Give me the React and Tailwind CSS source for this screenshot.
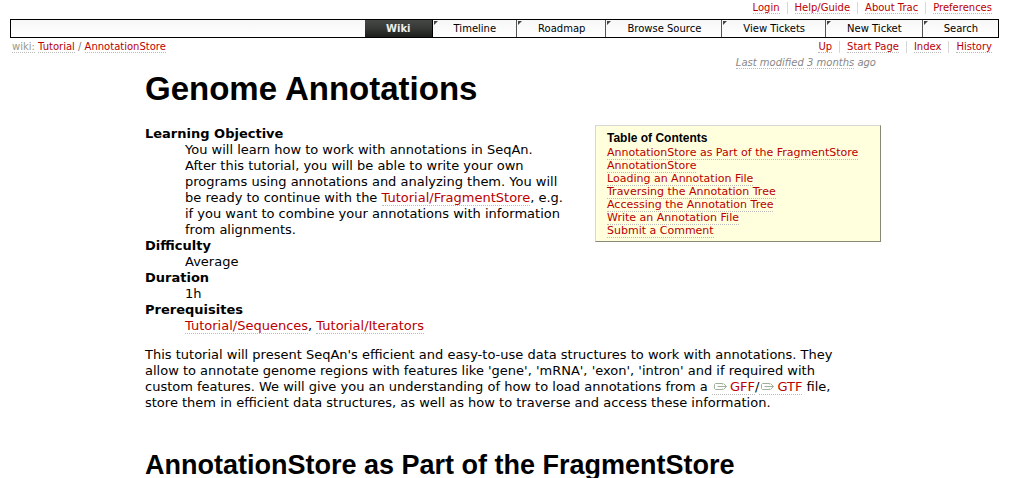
const tabs = ["Wiki", "Timeline", "Roadmap", "Browse Source", "View Tickets", "New Ticket", "Search"];
const metaLinks = ["Login", "Help/Guide", "About Trac", "Preferences"];
const pageLinks = ["Up", "Start Page", "Index", "History"];
const contents = [
  "AnnotationStore as Part of the FragmentStore",
  "AnnotationStore",
  "Loading an Annotation File",
  "Traversing the Annotation Tree",
  "Accessing the Annotation Tree",
  "Write an Annotation File",
  "Submit a Comment",
];

function Link({ children, tone = "text-[#bb0000]" }) {
  return (
    <a href="#" className={"border-b border-dotted border-[#bbbbbb] " + tone}>
      {children}
    </a>
  );
}

function LinkBar({ label, items }) {
  return (
    <nav aria-label={label}>
      <ul className="flex justify-end">
        {items.map((item) => (
          <li key={item} className="border-r border-[#d7d7d7] px-[7px] leading-3 last:border-r-0">
            <Link>{item}</Link>
          </li>
        ))}
      </ul>
    </nav>
  );
}

function ExternalLink({ children }) {
  return (
    <a href="#" className="border-b border-dotted border-[#bbbbbb] text-[#bb0000]">
      <svg className="mr-[2px] ml-[2px] inline-block h-[9px] w-[14px] align-baseline" viewBox="0 0 14 9" fill="none" stroke="#9fb09a" aria-hidden="true">
        <path d="M8.5 2.5v-1H1.5l-1 1v4l1 1h7v-1M3.5 4.5h9M9.5 1.5l3 3-3 3" />
      </svg>
      {children}
    </a>
  );
}

export default function App() {
  return (
    <div className="bg-white px-[10px] font-['DejaVu_Sans',sans-serif] text-[13px] leading-4 text-black">
      <header className="text-[10px] leading-3">
        <div className="h-[19px] pt-[2px]">
          <LinkBar label="Account" items={metaLinks} />
        </div>
        <nav aria-label="Main" className="border border-black bg-linear-to-b from-[#f7f7f7] to-white">
          <ul className="flex justify-end">
            {tabs.map((tab, i) =>
              i === 0 ? (
                <li key={tab} className="border-r border-black bg-linear-to-b from-[#454845] via-[#353835] to-[#1c1e1c]">
                  <a href="#" aria-current="page" className="block px-[21px] pt-[3px] pb-[2px] font-bold text-[#eeeeee]">{tab}</a>
                </li>
              ) : (
                <li key={tab} className="relative border-r border-[#555555] last:border-r-0">
                  <svg className="absolute top-px left-px size-1" viewBox="0 0 4 4" aria-hidden="true">
                    <path d="M0 0h4L0 4z" fill="#444" />
                  </svg>
                  <a href="#" className="block pt-[3px] pr-5 pb-[2px] pl-[21px]">{tab}</a>
                </li>
              ),
            )}
          </ul>
        </nav>
        <div className="flex justify-between pt-[3px]">
          <nav aria-label="Breadcrumb" className="pl-[2px] text-[#777777]">
            <Link tone="text-[#999988]">wiki:</Link> <Link>Tutorial</Link> / <Link>AnnotationStore</Link>
          </nav>
          <LinkBar label="Page" items={pageLinks} />
        </div>
      </header>

      <main className="mx-auto max-w-[719px]">
        <p className="-mr-3 pt-1 text-right text-[10px] leading-3 text-[#888888] italic">
          <Link tone="text-[#888888]">Last modified</Link> <Link tone="text-[#888888]">3 months</Link> ago
        </p>
        <h1 className="font-['Liberation_Sans',sans-serif] text-[33px] leading-10 font-bold">Genome Annotations</h1>
        <div className="-mr-[17px] flex items-start pt-4">
          <dl className="min-w-0 flex-1 pt-px">
            <dt className="font-bold">Learning Objective</dt>
            <dd className="ml-10">
              You will learn how to work with annotations in SeqAn.
              <br />
              After this tutorial, you will be able to write your own
              <br />
              programs using annotations and analyzing them. You will
              <br />
              be ready to continue with the <Link>Tutorial/FragmentStore</Link>, e.g.
              <br />
              if you want to combine your annotations with information
              <br />
              from alignments.
            </dd>
            <dt className="font-bold">Difficulty</dt>
            <dd className="ml-10">Average</dd>
            <dt className="font-bold">Duration</dt>
            <dd className="ml-10">1h</dd>
            <dt className="font-bold">Prerequisites</dt>
            <dd className="ml-10">
              <Link>Tutorial/Sequences</Link>, <Link>Tutorial/Iterators</Link>
            </dd>
          </dl>
          <nav aria-labelledby="toc" className="ml-3 w-[286px] shrink-0 border border-t-[#d7d7d7] border-r-[#888877] border-b-[#888877] border-l-[#d7d7d7] bg-[#ffffdd] px-[11px] py-1 text-[11px] leading-[13px]">
            <h2 id="toc" className="font-['Liberation_Sans',sans-serif] text-[12px] leading-4 font-bold">Table of Contents</h2>
            <ul>
              {contents.map((entry) => (
                <li key={entry}><Link>{entry}</Link></li>
              ))}
            </ul>
          </nav>
        </div>
        <p className="pt-[13px]">
          This tutorial will present SeqAn's efficient and easy-to-use data structures to work with annotations. They
          <br />
          allow to annotate genome regions with features like 'gene', 'mRNA', 'exon', 'intron' and if required with
          <br />
          custom features. We will give you an understanding of how to load annotations from a{" "}
          <ExternalLink>GFF</ExternalLink>/<ExternalLink>GTF</ExternalLink> file,
          <br />
          store them in efficient data structures, as well as how to traverse and access these information.
        </p>
        <h2 className="pt-9 font-['Liberation_Sans',sans-serif] text-[27px] leading-9 font-bold">
          AnnotationStore as Part of the FragmentStore
        </h2>
      </main>
    </div>
  );
}
